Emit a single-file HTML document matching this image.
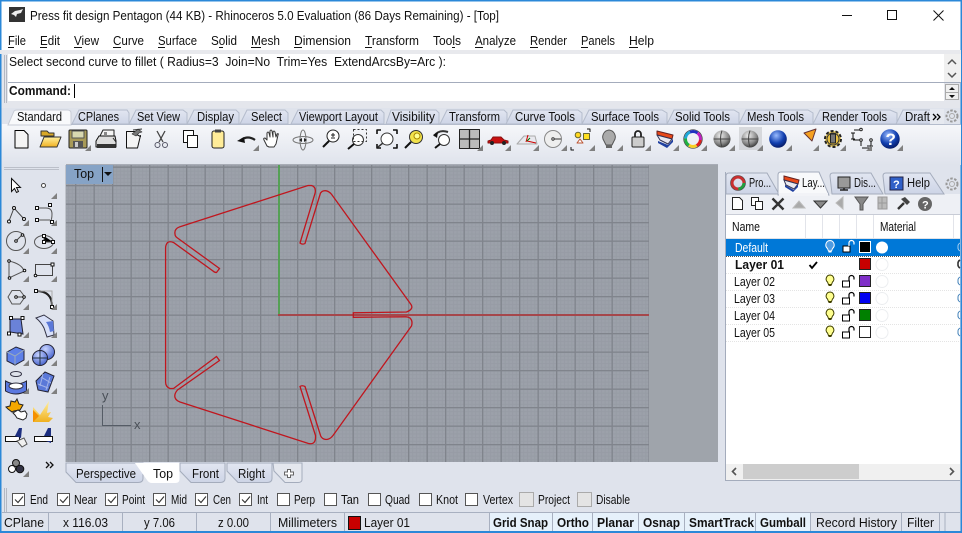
<!DOCTYPE html>
<html><head><meta charset="utf-8"><style>
html,body{margin:0;padding:0;background:#dfe3ec;overflow:hidden}
svg{display:block}
text{font-family:"Liberation Sans",sans-serif;font-size:12.5px;fill:#111}
.b{font-weight:bold}
</style></head><body>
<svg width="962" height="533" viewBox="0 0 962 533" xmlns="http://www.w3.org/2000/svg">
<defs>
<pattern id="minor" patternUnits="userSpaceOnUse" x="279" y="315" width="3.7" height="3.7"><rect width="3.7" height="3.7" fill="#9ca1aa"/><rect width="3.7" height="1" fill="#979ca5"/><rect width="1" height="3.7" fill="#979ca5"/></pattern>
<pattern id="major" patternUnits="userSpaceOnUse" x="278.5" y="314.5" width="18.5" height="18.5"><rect width="1.3" height="18.5" fill="#80848c"/><rect width="18.5" height="1.3" fill="#80848c"/></pattern>
<linearGradient id="tb" x1="0" y1="0" x2="0" y2="1"><stop offset="0" stop-color="#f6f7fa"/><stop offset="1" stop-color="#dfe3ec"/></linearGradient>
<linearGradient id="tab" x1="0" y1="0" x2="0" y2="1"><stop offset="0" stop-color="#e2e6f1"/><stop offset="1" stop-color="#cdd4e6"/></linearGradient>
<linearGradient id="yel" x1="0" y1="0" x2="0" y2="1"><stop offset="0" stop-color="#fff0a0"/><stop offset="1" stop-color="#f0b020"/></linearGradient>
<radialGradient id="gs" cx=".4" cy=".3" r=".8"><stop offset="0" stop-color="#eee"/><stop offset=".6" stop-color="#888"/><stop offset="1" stop-color="#222"/></radialGradient>
<radialGradient id="bs" cx=".4" cy=".3" r=".8"><stop offset="0" stop-color="#9bf"/><stop offset=".55" stop-color="#1240b0"/><stop offset="1" stop-color="#041050"/></radialGradient>
<radialGradient id="ls" cx=".4" cy=".3" r=".8"><stop offset="0" stop-color="#c8d4ff"/><stop offset="1" stop-color="#3a58c8"/></radialGradient>
<path id="m" d="M0 0h-6l6-6z" fill="#808080"/>
<g id="bulb"><path d="M0-6a4 4 0 0 0-2.500 7l1 2.500h3l1-2.500A4 4 0 0 0 0-6z" fill="#ffff90" stroke="#404000"/><path d="M-1.500 4.500h3" stroke="#404000"/></g>
<g id="lock"><rect x="-5.500" y="0" width="7" height="6" fill="#fff" stroke="#000"/><path d="M1 0v-3a2.500 2.500 0 0 1 5 0v1.500" fill="none" stroke="#000" stroke-width="1.200"/></g>
</defs>

<!-- window -->
<rect width="962" height="533" fill="#dfe3ec"/>
<rect width="962" height="50" fill="#fff"/>
<rect x="0" y="0" width="962" height="1.500" fill="#2b88d8"/>
<rect x="0" y="0" width="1.500" height="533" fill="#2b88d8"/>
<rect x="960.500" y="0" width="1.500" height="533" fill="#2b88d8"/>
<rect x="0" y="531" width="962" height="2" fill="#2b88d8"/>

<!-- title -->
<rect x="9" y="7" width="16" height="15" fill="#333"/><path d="M11 14l4-3 5-1 3-1-2 4-4 1-1 3-2-2z" fill="#eee"/>
<text x="30" y="20" textLength="469" lengthAdjust="spacingAndGlyphs">Press fit design Pentagon (44 KB) - Rhinoceros 5.0 Evaluation (86 Days Remaining) - [Top]</text>
<path d="M842 15.500h10" stroke="#111"/><rect x="887.500" y="10.500" width="9" height="9" fill="none" stroke="#111"/><path d="M933.500 10.500l10 10m0-10l-10 10" stroke="#111"/>

<!-- menu -->
<g>
<text x="8" y="45" textLength="18" lengthAdjust="spacingAndGlyphs">File</text><path d="M8 47.500h6" stroke="#111"/>
<text x="40" y="45" textLength="20" lengthAdjust="spacingAndGlyphs">Edit</text><path d="M40 47.500h7" stroke="#111"/>
<text x="74" y="45" textLength="25" lengthAdjust="spacingAndGlyphs">View</text><path d="M74 47.500h8" stroke="#111"/>
<text x="113" y="45" textLength="31" lengthAdjust="spacingAndGlyphs">Curve</text><path d="M113 47.500h8" stroke="#111"/>
<text x="158" y="45" textLength="39" lengthAdjust="spacingAndGlyphs">Surface</text><path d="M158 47.500h7" stroke="#111"/>
<text x="211" y="45" textLength="26" lengthAdjust="spacingAndGlyphs">Solid</text><path d="M219 47.500h4" stroke="#111"/>
<text x="251" y="45" textLength="29" lengthAdjust="spacingAndGlyphs">Mesh</text><path d="M251 47.500h10" stroke="#111"/>
<text x="294" y="45" textLength="57" lengthAdjust="spacingAndGlyphs">Dimension</text><path d="M294 47.500h8" stroke="#111"/>
<text x="365" y="45" textLength="54" lengthAdjust="spacingAndGlyphs">Transform</text><path d="M365 47.500h7" stroke="#111"/>
<text x="433" y="45" textLength="28" lengthAdjust="spacingAndGlyphs">Tools</text><path d="M452 47.500h3" stroke="#111"/>
<text x="475" y="45" textLength="41" lengthAdjust="spacingAndGlyphs">Analyze</text><path d="M475 47.500h8" stroke="#111"/>
<text x="530" y="45" textLength="37" lengthAdjust="spacingAndGlyphs">Render</text><path d="M530 47.500h8" stroke="#111"/>
<text x="581" y="45" textLength="34" lengthAdjust="spacingAndGlyphs">Panels</text><path d="M581 47.500h7" stroke="#111"/>
<text x="629" y="45" textLength="25" lengthAdjust="spacingAndGlyphs">Help</text><path d="M629 47.500h9" stroke="#111"/>
</g>

<!-- command -->
<rect x="0" y="50" width="961" height="4" fill="#e8e9ed"/>
<rect x="1.500" y="54" width="959" height="54" fill="#e4e6ec"/>
<rect x="8" y="54" width="936" height="28" fill="#fff"/>
<rect x="8" y="83" width="936" height="18" fill="#fff"/>
<path d="M8 82.500h953" stroke="#a4acbc"/>
<path d="M4.500 55v48M6.500 55v48" stroke="#b4b8c2"/>
<text x="9" y="66" xml:space="preserve" style="white-space:pre" textLength="437" lengthAdjust="spacingAndGlyphs">Select second curve to fillet ( Radius=3  Join=No  Trim=Yes  ExtendArcsBy=Arc ):</text>
<text x="9" y="95" class="b" textLength="62" lengthAdjust="spacingAndGlyphs">Command:</text>
<path d="M74.500 84v14" stroke="#000"/>
<rect x="944" y="54" width="17" height="28" fill="#f0f0f0"/>
<path d="M948 64l4-4 4 4M948 73l4 4 4-4" fill="none" stroke="#555" stroke-width="1.500"/>
<rect x="945.500" y="84.500" width="13" height="8" fill="#f0f0f0" stroke="#aaa"/><rect x="945.500" y="92.500" width="13" height="7" fill="#f0f0f0" stroke="#aaa"/>
<path d="M949 90l3-3 3 3zM949 95l3 3 3-3z" fill="#111"/>

<!-- toolbar tabs -->
<rect x="2" y="124" width="959" height="41" fill="url(#tb)"/>
<path d="M66 164.500h652" stroke="#a8acb6"/>
<g fill="url(#tab)" stroke="#b4bccc">
<path d="M72 124l7-14h48l2 3v11z"/><path d="M129 124l7-14h47l4 3v11z"/><path d="M187 124l7-14h42l3 3v11z"/><path d="M240 124l7-14h38l3 3v11z"/><path d="M291 124l7-14h83l3 3v11z"/><path d="M386 124l5-14h45l3 3v11z"/><path d="M440 124l7-14h57l3 3v11z"/><path d="M506 124l7-14h65l4 3v11z"/><path d="M582 124l7-14h73l5 3v11z"/><path d="M667 124l7-14h60l5 3v11z"/><path d="M739 124l7-14h62l5 3v11z"/><path d="M813 124l7-14h70l7 3v11z"/><path d="M896 124l7-14h30v14z"/>
</g>
<path d="M8 125l6-14q1-1 3-1h50q4 0 4 3v12z" fill="#f8f9fb" stroke="#c8ccd6"/>
<path d="M71 124.500h890" stroke="#b4bccc"/>
<rect x="930" y="109" width="14" height="15" fill="#e6e9f0"/>
<g>
<text x="17" y="121" textLength="45" lengthAdjust="spacingAndGlyphs">Standard</text>
<text x="78" y="121" textLength="41" lengthAdjust="spacingAndGlyphs">CPlanes</text>
<text x="137" y="121" textLength="43" lengthAdjust="spacingAndGlyphs">Set View</text>
<text x="197" y="121" textLength="37" lengthAdjust="spacingAndGlyphs">Display</text>
<text x="251" y="121" textLength="31" lengthAdjust="spacingAndGlyphs">Select</text>
<text x="299" y="121" textLength="79" lengthAdjust="spacingAndGlyphs">Viewport Layout</text>
<text x="392" y="121" textLength="43" lengthAdjust="spacingAndGlyphs">Visibility</text>
<text x="449" y="121" textLength="51" lengthAdjust="spacingAndGlyphs">Transform</text>
<text x="515" y="121" textLength="60" lengthAdjust="spacingAndGlyphs">Curve Tools</text>
<text x="591" y="121" textLength="68" lengthAdjust="spacingAndGlyphs">Surface Tools</text>
<text x="675" y="121" textLength="55" lengthAdjust="spacingAndGlyphs">Solid Tools</text>
<text x="747" y="121" textLength="57" lengthAdjust="spacingAndGlyphs">Mesh Tools</text>
<text x="822" y="121" textLength="65" lengthAdjust="spacingAndGlyphs">Render Tools</text>
<text x="905" y="121" textLength="25" lengthAdjust="spacingAndGlyphs">Draft</text>
</g>
<path d="M933 114l3 3-3 3M937 114l3 3-3 3" fill="none" stroke="#000" stroke-width="1.300"/>
<g transform="translate(952 116)"><circle r="5.500" fill="none" stroke="#999" stroke-width="2" stroke-dasharray="2.500 1.500"/><circle r="2.500" fill="none" stroke="#aaa"/></g>

<!-- toolbar icons -->
<g stroke-linejoin="round">
<path d="M15 130.500h9l4 4v13.500h-13z" fill="#f4f4f4" stroke="#000"/>
<path d="M41 134v-3h6l2 2h5v3h-13z" fill="#d8a828" stroke="#333"/><path d="M40 147l4-10h17l-4 10z" fill="url(#yel)" stroke="#333"/>
<rect x="69" y="130" width="18" height="18" rx="1" fill="#a89a58" stroke="#222"/><rect x="72" y="131" width="12" height="7" fill="#d8d8b0" stroke="#555"/><rect x="73" y="141" width="10" height="7" fill="#555"/><rect x="75" y="142" width="3" height="5" fill="#ccc"/><use href="#m" x="91" y="151"/>
<path d="M100 136l3-6h11v6z" fill="#f4f4f4" stroke="#222"/><path d="M96 141l3-5h16l1 5v6H96z" fill="#ddd" stroke="#111"/><rect x="97" y="144" width="19" height="4" fill="#333"/><path d="M113 138l3 4v5" stroke="#222" fill="none"/><rect x="104" y="132" width="3" height="3" fill="#888"/>
<path d="M126.500 131.500h10v3l4 2v-1l-3 12.500h-11z" fill="#f4f4f4" stroke="#111"/><path d="M132 134l6-5 4 3-3 1-3 3z" fill="#777" stroke="#333" stroke-width=".6"/><path d="M133 130l9-1" stroke="#333"/>
<path d="M157 131l6 11M165 131l-6 11" stroke="#444" stroke-width="1.300"/><circle cx="157.500" cy="145" r="2.500" fill="none" stroke="#556"/><circle cx="165" cy="145" r="2.500" fill="none" stroke="#556"/>
<rect x="183.500" y="130.500" width="10" height="12" fill="#fff" stroke="#111"/><rect x="187.500" y="135.500" width="10" height="12" fill="#fff" stroke="#111"/>
<rect x="212" y="131" width="12" height="17" rx="2" fill="#ffec98" stroke="#222"/><rect x="215" y="129.500" width="6" height="3" fill="#444"/>
<path d="M241 140q7-5 14 0" fill="none" stroke="#222" stroke-width="2.200"/><path d="M237 141l7-4 1 6z" fill="#111"/><use href="#m" x="259" y="151"/>
<path d="M267 146l-3-6q-1-2 1-2l2 2v-7q1-2 2 0l1 4v-6q1-2 2 0l1 6v-5q1-2 2 0l1 5 1-3q2-1 1 1l-2 9-2 3h-5z" fill="#fff" stroke="#333"/>
<g stroke="#777" fill="none"><ellipse cx="303" cy="140" rx="10" ry="3.500"/><ellipse cx="303" cy="140" rx="3" ry="10"/></g><path d="M299 140l3-2v4zM307 140l-3-2v4z" fill="#222"/>
<circle cx="333" cy="136" r="6" fill="#fff" stroke="#222"/><path d="M329 141l-6 6" stroke="#111" stroke-width="2"/><path d="M331 135h4M333 133v4M331 138h4" stroke="#222" fill="none"/>
<circle cx="358" cy="140" r="5.500" fill="#fff" stroke="#333"/><path d="M354 144l-6 5" stroke="#111" stroke-width="2"/><rect x="353.500" y="129.500" width="13" height="12" fill="none" stroke="#333" stroke-dasharray="2 2"/>
<circle cx="387" cy="139" r="6" fill="#fff" stroke="#333"/><path d="M383 143l-5 4" stroke="#333" stroke-width="1.500"/><path d="M377 134v-4h4M393 130h4v4M377 144v4h4M393 148h4v-4" fill="none" stroke="#111" stroke-width="1.600"/>
<circle cx="416" cy="137" r="6.500" fill="#f2e24a" stroke="#333"/><circle cx="417" cy="136" r="3" fill="#ffff90" stroke="#aa8800"/><path d="M411 142l-6 6" stroke="#111" stroke-width="2"/>
<circle cx="444" cy="140" r="5.500" fill="#fff" stroke="#333"/><path d="M440 144l-5 4" stroke="#111" stroke-width="2"/><path d="M434 136q5-7 14-4" fill="none" stroke="#333" stroke-width="2"/><path d="M433 135l5-3-1 6z" fill="#111"/>
<rect x="459.500" y="129.500" width="20" height="19" fill="#bbb" stroke="#222"/><path d="M469.500 130v18M460 139h19" stroke="#222" stroke-width="1.300"/>
<use href="#m" x="483" y="151"/>
<path d="M488 141l3-1 2-3h8l3 3 4 1v2h-20z" fill="#c81010" stroke="#811"/><circle cx="492" cy="143" r="2" fill="#222"/><circle cx="504" cy="143" r="2" fill="#222"/><use href="#m" x="511" y="151"/>
<path d="M517 144l7-8h11l2 8z" fill="#e8e8ee" stroke="#aaa"/><path d="M526 142l2-7M527 141l9 2" stroke="#c00"/><path d="M527 141l3-3" stroke="#070"/><use href="#m" x="539" y="151"/>
<circle cx="553" cy="139" r="8.500" fill="#eee" stroke="#888"/><path d="M553 139h8" stroke="#333"/><circle cx="553" cy="139" r="1.200" fill="#fff" stroke="#333"/><use href="#m" x="567" y="151"/>
<circle cx="578" cy="135" r="2.800" fill="#ffd820" stroke="#663"/><rect x="583.500" y="133.500" width="6" height="6" fill="#ffe020" stroke="#663"/><path d="M577 143l3-4 3 4z" fill="#fff" stroke="#b53"/><path d="M587 129h3v3M571 147v3h3" fill="none" stroke="#111"/><use href="#m" x="595" y="151"/>
<path d="M609 130a7 7 0 0 0-5 11l2 4h6l2-4a7 7 0 0 0-5-11z" fill="#aaa" stroke="#555"/><rect x="606" y="145" width="6" height="3" fill="#666"/><use href="#m" x="623" y="151"/>
<rect x="632" y="137" width="12" height="10" rx="1" fill="#ccc" stroke="#222"/><path d="M635 137v-3a3 3 0 0 1 6 0v3" fill="none" stroke="#222" stroke-width="1.800"/><use href="#m" x="651" y="151"/>
<path d="M657 131l16 4-1 4-15-4z" fill="#e84818" stroke="#622"/><path d="M657 135l15 4-4 5-8-4z" fill="#e8e8f0" stroke="#335"/><path d="M658 141l10 4 5-6v3l-6 6-9-5z" fill="#2040a0"/><use href="#m" x="679" y="151"/>
<circle cx="693" cy="139" r="7.500" fill="none" stroke="#e02020" stroke-width="3" stroke-dasharray="8 40"/><circle cx="693" cy="139" r="7.500" fill="none" stroke="#f8d020" stroke-width="3" stroke-dasharray="8 39" stroke-dashoffset="-8"/><circle cx="693" cy="139" r="7.500" fill="none" stroke="#20b040" stroke-width="3" stroke-dasharray="8 39" stroke-dashoffset="-16"/><circle cx="693" cy="139" r="7.500" fill="none" stroke="#20a8d8" stroke-width="3" stroke-dasharray="8 39" stroke-dashoffset="-24"/><circle cx="693" cy="139" r="7.500" fill="none" stroke="#2030c0" stroke-width="3" stroke-dasharray="8 39" stroke-dashoffset="-32"/><circle cx="693" cy="139" r="7.500" fill="none" stroke="#c020c0" stroke-width="3" stroke-dasharray="8 39" stroke-dashoffset="-40"/><circle cx="693" cy="139" r="9.300" fill="none" stroke="#444" stroke-width=".7"/><use href="#m" x="707" y="151"/>
<circle cx="722" cy="139" r="8.500" fill="url(#gs)"/><path d="M713.500 139h17M722 130.500q-3 8 0 17" stroke="#444" fill="none"/><use href="#m" x="735" y="151"/>
<rect x="739" y="127" width="23" height="23" fill="#c4c6ca" opacity=".6"/><circle cx="750" cy="139" r="8.500" fill="url(#gs)"/><path d="M741.500 139h17M750 130.500q-3 8 0 17" stroke="#444" fill="none"/><use href="#m" x="763" y="151"/>
<circle cx="778" cy="139" r="8.800" fill="url(#bs)"/><use href="#m" x="792" y="151"/>
<path d="M804 133l12-4-4 12z" fill="#f5a020" stroke="#633"/><use href="#m" x="819" y="151"/>
<g transform="translate(833 139)"><circle r="8" fill="#f0d060" stroke="#222" stroke-width="2" stroke-dasharray="3 2"/><circle r="6" fill="#e8c040" stroke="#333"/><rect x="-2.500" y="-5" width="5" height="9" fill="#777" stroke="#222"/></g><use href="#m" x="846" y="151"/>
<g fill="none" stroke="#111"><path d="M854 130h6M853 133v6M851 133h4M851 139h4M853 140h8v6M862 148h8M867 146h6M871 141v7"/></g><g fill="#fff" stroke="#222"><circle cx="861" cy="129.500" r="1.300"/><circle cx="861" cy="140" r="1.300"/><circle cx="871" cy="140" r="1.300"/></g><use href="#m" x="872" y="151"/>
<circle cx="890" cy="139" r="9.700" fill="url(#bs)"/><text x="885.500" y="145" class="b" style="font-size:17px;fill:#fff">?</text><use href="#m" x="903" y="151"/>
</g>

<!-- left toolbar -->
<rect x="2" y="165" width="63" height="320" fill="#dfe3ec"/>
<path d="M4 167.500h55M4 169.500h55" stroke="#bbbfc9"/>
<g>
<path d="M11.500 178.500v13l3-3 2 4 2-1-2-4h4z" fill="#fff" stroke="#111"/>
<circle cx="43.500" cy="185.500" r="2" fill="#fff" stroke="#444"/><use href="#m" x="57" y="199"/>
<path d="M9 221l5-13 10 11" fill="none" stroke="#444"/><g fill="#fff" stroke="#111"><circle cx="9" cy="221.500" r="1.500"/><circle cx="14" cy="208" r="1.500"/><circle cx="24" cy="219" r="1.500"/></g><use href="#m" x="29" y="226"/>
<path d="M38 208h8q6 0 6 6t-2 8" fill="none" stroke="#555"/><path d="M38 220h12" stroke="#555"/><g fill="#fff" stroke="#111"><rect x="35.500" y="206.500" width="3" height="3"/><rect x="35.500" y="218.500" width="3" height="3"/><rect x="48.500" y="203.500" width="3" height="3"/><rect x="50.500" y="220.500" width="3" height="3"/></g><use href="#m" x="57" y="226"/>
<circle cx="16" cy="241" r="9.500" fill="none" stroke="#555"/><path d="M16 241l6-6" stroke="#444"/><circle cx="16" cy="241" r="1.300" fill="#fff" stroke="#111"/><circle cx="22.500" cy="235" r="1.300" fill="#fff" stroke="#111"/><use href="#m" x="29" y="254"/>
<ellipse cx="44" cy="242" rx="9.500" ry="6.500" fill="none" stroke="#555"/><path d="M44 236v6h9" stroke="#444"/><g fill="#fff" stroke="#111"><rect x="42.500" y="234.500" width="3" height="3"/><rect x="42.500" y="240.500" width="3" height="3"/><rect x="51.500" y="240.500" width="3" height="3"/></g><use href="#m" x="57" y="254"/>
<path d="M9 261q13 3 15 10l-15 7z" fill="none" stroke="#555"/><g fill="#fff" stroke="#111"><circle cx="9" cy="261" r="1.300"/><circle cx="24.500" cy="270.500" r="1.300"/><circle cx="9.500" cy="278" r="1.300"/></g><use href="#m" x="29" y="282"/>
<rect x="35.500" y="264.500" width="17" height="11" fill="none" stroke="#444"/><circle cx="35.500" cy="275.500" r="1.300" fill="#fff" stroke="#111"/><rect x="51" y="263" width="3" height="3" fill="#fff" stroke="#111"/><use href="#m" x="57" y="282"/>
<path d="M8 297l4-6.500h8l5 6.500-5 7h-8z" fill="none" stroke="#555"/><path d="M16 297h8" stroke="#444"/><circle cx="16" cy="297" r="1.300" fill="#fff" stroke="#111"/><circle cx="24" cy="297" r="1.300" fill="#fff" stroke="#111"/><use href="#m" x="29" y="310"/>
<path d="M36 291q16 0 16 15" fill="none" stroke="#222" stroke-width="2"/><path d="M36 291h16v15" fill="none" stroke="#aaa"/><rect x="34.500" y="289.500" width="3" height="3" fill="#fff" stroke="#111"/><rect x="50.500" y="305.500" width="3" height="3" fill="#fff" stroke="#111"/><use href="#m" x="57" y="310"/>
<path d="M10 319h11l2 15-13-2z" fill="#6a82d8" stroke="#223"/><g fill="#fff" stroke="#111"><rect x="9.500" y="316.500" width="3" height="3"/><rect x="21" y="316.500" width="3" height="3"/><rect x="7.500" y="332" width="3" height="3"/><rect x="18" y="333" width="3" height="3"/></g><use href="#m" x="29" y="338"/>
<path d="M36 318l8-3 9 6 1 14-7 2-3-9q-3-6-8-10z" fill="#d8e0f8" stroke="#334"/><path d="M46 322l7-1 1 10-4 1q-1-6-4-10z" fill="#5a78d8"/><use href="#m" x="57" y="338"/>
<path d="M7 352l9-5 8 3v10l-9 5-8-4z" fill="#5e80e8" stroke="#223"/><path d="M7 352l8 4 9-6M15 356v9" fill="none" stroke="#9ab"/><use href="#m" x="29" y="366"/>
<circle cx="47" cy="352" r="7.500" fill="url(#ls)" stroke="#223"/><circle cx="40" cy="358" r="7.500" fill="url(#ls)" stroke="#223"/><path d="M33 358h14M40 351v14" fill="none" stroke="#234"/><use href="#m" x="57" y="366"/>
<ellipse cx="16" cy="374" rx="5.500" ry="2.500" fill="none" stroke="#334"/><path d="M5.500 381v10q10 6 21 0v-10q-10 6-21 0z" fill="#5a78e0" stroke="#223"/><ellipse cx="16" cy="386" rx="7" ry="3" fill="#fff" stroke="#334"/><use href="#m" x="29" y="394"/>
<path d="M36 381l9-9 9 4-6 16-10-2z" fill="#5a78d8" stroke="#223"/><path d="M41 377l10 6M38 384l10 4M43 374l-3 12M50 377l-4 13" stroke="#a4b4e8" fill="none"/><use href="#m" x="57" y="394"/>
<path d="M6 407l4-1 1-5 4 1 2-3 2 5 4 1-3 5-6 1-2 1-4-3z" fill="#f5a800" stroke="#222"/><path d="M13 413l5-3 3 2 4-1 2 3-1 4-3 2-3-1-3-1-2-3z" fill="#fff" stroke="#222"/>
<path d="M33 422v-15l7 8 9-14-2 12 4-1-3 5 5 1-4 4z" fill="url(#yel)"/><path d="M33 422v-12l6 6z" fill="#f59000"/>
<rect x="5.500" y="436.500" width="14" height="5" fill="#fff" stroke="#111"/><path d="M15 436l4-8 3 0-1 10z" fill="#1d2f80"/><path d="M17 441l7-3 3 6-5 3z" fill="#f0f0f0" stroke="#555"/>
<rect x="34.500" y="436.500" width="18" height="5" fill="#fff" stroke="#111"/><path d="M44 436l4-8h3v8z" fill="#1d2f80"/><path d="M46 441h5v2z" fill="#1d2f80"/>
<circle cx="16" cy="463" r="3.500" fill="#888" stroke="#111"/><circle cx="12" cy="469" r="3.500" fill="#fff" stroke="#111"/><circle cx="20" cy="469" r="3.800" fill="#334" stroke="#111"/><use href="#m" x="29" y="477"/>
<path d="M46 462l3 3-3 3M50 462l3 3-3 3" fill="none" stroke="#111" stroke-width="1.300"/>
</g>

<!-- viewport -->
<rect x="66" y="165" width="652" height="297" fill="#9fa4ab"/>
<rect x="66" y="165" width="583" height="297" fill="url(#minor)"/>
<rect x="66" y="165" width="583" height="297" fill="url(#major)"/>
<rect x="65" y="165" width="1" height="297" fill="#c0c4cc"/>
<rect x="66" y="165" width="47" height="19" fill="#86a3c6"/>
<text x="74" y="178" textLength="20" lengthAdjust="spacingAndGlyphs">Top</text>
<path d="M102.500 167v15" stroke="#111"/><path d="M104 172h8l-4 4z" fill="#111"/>
<rect x="278" y="165" width="2" height="150" fill="#55a055"/>
<rect x="278" y="314" width="371" height="2" fill="#a5474b"/>
<path d="M353.300 312.800L406.500 312Q414 309 411 304.500L331.700 194.500Q327 189 322 191.500L320.500 193L305 243.500Q302.500 245 300 243L315 193.500Q316.500 187 311.500 185.500L308 185.500L180 226.700Q174 229 175 234Q175 236.500 177.500 238L219.500 268.500L216.500 272.500Q214.500 272.500 213 271L173.500 242.500Q170 241 167.500 242.500Q165.600 245 165.600 248V382Q165.600 387 170 388.500H173.500L216.500 356.500L219.500 360.500L177.500 390Q174 394 175 397.500Q176 400.500 180 402L308.500 443.500Q315 445 315.500 438V435.500L300 386.500Q302 385 305 386.500L320.700 436Q322 439 326 439.500Q330 439.500 333 435.500L411.500 326Q413 321 410 318Q408 316.800 406 316.800L353.300 317.300Z" fill="none" stroke="#c0161e" stroke-width="1.300"/>
<path d="M102.500 405v20.500H131" fill="none" stroke="#555c66"/>
<text x="102" y="400" style="font-size:13px;fill:#4a5058">y</text><text x="134" y="429" style="font-size:13px;fill:#4a5058">x</text>

<!-- viewport tabs -->
<g fill="url(#tab)" stroke="#a4acbc">
<path d="M66 463v9l10 10.500h62q5 0 5-4v-15.500z"/>
<path d="M180 463v8l11 11.500h29q5 0 5-4v-15.500z"/>
<path d="M227 463v8l11 11.500h29q5 0 5-4v-15.500z"/>
</g>
<path d="M273 463l1 8 11 11.500h13q4 0 4-3v-16.500z" fill="#e4e7ee" stroke="#a4acbc"/>
<path d="M135 463H179.500v16q0 4-4 4H152q-3 0-5-3z" fill="#fff"/>
<text x="76" y="478" textLength="60" lengthAdjust="spacingAndGlyphs">Perspective</text>
<text x="153" y="478" textLength="20" lengthAdjust="spacingAndGlyphs">Top</text>
<text x="192" y="478" textLength="27" lengthAdjust="spacingAndGlyphs">Front</text>
<text x="238" y="478" textLength="27" lengthAdjust="spacingAndGlyphs">Right</text>
<path d="M287.500 469.500h3v2.500h3v3h-3v2.500h-3v-2.500h-3v-3h3z" fill="#fff" stroke="#666"/>

<!-- panel -->
<path d="M725.500 172v308.500H960" fill="none" stroke="#a4acbc"/>
<rect x="726" y="194" width="234" height="286" fill="#fff"/>
<rect x="726" y="194" width="234" height="20" fill="#eef0f5"/>
<path d="M726 214.500h234" stroke="#c8ccd6"/>
<path d="M726 194v-18q0-3 3-3h38l12 21z" fill="url(#tab)" stroke="#a4acbc"/>
<path d="M832 194l-2-18q0-3 3-3h38l12 21z" fill="url(#tab)" stroke="#a4acbc"/>
<path d="M885 194l-2-18q0-3 3-3h44l14 21z" fill="url(#tab)" stroke="#a4acbc"/>
<path d="M778 195v-20q0-3 3-3h38l10 23z" fill="#f8f9fb" stroke="#a4acbc"/>
<rect x="779" y="193" width="49" height="3" fill="#f2f3f7"/>
<circle cx="738" cy="183" r="6" fill="none" stroke="#c83030" stroke-width="3"/><circle cx="738" cy="183" r="6" fill="none" stroke="#20a040" stroke-width="3" stroke-dasharray="9 30"/><circle cx="738" cy="183" r="7.500" fill="none" stroke="#444" stroke-width=".6"/>
<text x="749" y="187" textLength="22" lengthAdjust="spacingAndGlyphs">Pro...</text>
<path d="M784 176l15 4-1 4-14-4z" fill="#e84818" stroke="#622"/><path d="M784 180l14 4-4 5-8-4z" fill="#e8e8f0" stroke="#335"/><path d="M785 185l9 5 4-6v3l-5 5-8-5z" fill="#2040a0"/>
<text x="802" y="187" textLength="23" lengthAdjust="spacingAndGlyphs">Lay...</text>
<rect x="838" y="177" width="12" height="11" fill="#999" stroke="#222"/><path d="M840 190h8M844 188v2" stroke="#222" stroke-width="1.500"/>
<text x="854" y="187" textLength="22" lengthAdjust="spacingAndGlyphs">Dis...</text>
<rect x="890" y="177" width="13" height="13" fill="#3060c8" stroke="#224"/><text x="893" y="188" class="b" style="fill:#fff;font-size:11px">?</text>
<text x="907" y="187" textLength="23" lengthAdjust="spacingAndGlyphs">Help</text>
<g transform="translate(952 184)"><circle r="5.500" fill="none" stroke="#999" stroke-width="2" stroke-dasharray="2.500 1.500"/><circle r="2.500" fill="none" stroke="#aaa"/></g>
<!-- panel toolbar -->
<path d="M732.500 197.500h7l3 3v9h-10z" fill="#fff" stroke="#222"/>
<rect x="751.500" y="197.500" width="7" height="8" fill="#fff" stroke="#222"/><rect x="755.500" y="201.500" width="7" height="8" fill="#fff" stroke="#222"/>
<path d="M772.500 198.500l11 11m0-11l-11 11" stroke="#333" stroke-width="2.400"/>
<path d="M793 208l6-7 6 7z" fill="#aaa" stroke="#bbb"/>
<path d="M814 201h13l-6.500 7z" fill="#888" stroke="#333"/>
<path d="M843 197v12l-7-6z" fill="#aaa" stroke="#bbb"/>
<path d="M855 197h13l-5 7v6h-3v-6z" fill="#888" stroke="#555"/>
<rect x="878" y="197" width="9" height="12" fill="#bbb" stroke="#999"/><path d="M882 197v12M878 203h9" stroke="#999"/>
<path d="M898 209l6-6" stroke="#333" stroke-width="2.400"/><path d="M901 199l4-2 5 5-3 3z" fill="#444"/>
<circle cx="925" cy="204" r="7" fill="#666"/><text x="922" y="208.500" class="b" style="fill:#fff;font-size:11px">?</text>
<!-- header -->
<path d="M805.500 215v23M822.500 215v23M839.500 215v23M856.500 215v23M873.500 215v23M953.500 215v23" stroke="#e2e4ea"/>
<path d="M726 238.500h234" stroke="#e0e2e8"/>
<text x="732" y="231" textLength="28" lengthAdjust="spacingAndGlyphs">Name</text>
<text x="880" y="231" textLength="36" lengthAdjust="spacingAndGlyphs">Material</text>
<!-- rows -->
<rect x="726" y="239" width="234" height="17" fill="#0078d7"/>
<g stroke="#e4e4e4" stroke-dasharray="1 1"><path d="M726 273.500h234M726 290.500h234M726 307.500h234M726 324.500h234M726 341.500h234"/></g>
<path d="M726 256.500h234" stroke="#555" stroke-dasharray="1 1"/>
<text x="735" y="252" textLength="33" lengthAdjust="spacingAndGlyphs" style="fill:#fff">Default</text>
<text x="735" y="269" class="b" textLength="49" lengthAdjust="spacingAndGlyphs">Layer 01</text>
<text x="734" y="286" textLength="41" lengthAdjust="spacingAndGlyphs">Layer 02</text>
<text x="734" y="303" textLength="41" lengthAdjust="spacingAndGlyphs">Layer 03</text>
<text x="734" y="320" textLength="41" lengthAdjust="spacingAndGlyphs">Layer 04</text>
<text x="734" y="337" textLength="41" lengthAdjust="spacingAndGlyphs">Layer 05</text>
<path d="M809.500 265l2.500 3 5-6" fill="none" stroke="#000" stroke-width="1.800"/>
<g transform="translate(830 246.500)"><path d="M0-6a4.500 4.500 0 0 0-2.500 8l1 2.500h3l1-2.500A4.500 4.500 0 0 0 0-6z" fill="#4f9be0" stroke="#fff"/><path d="M-1.500 5.500h3" stroke="#fff"/></g>
<g transform="translate(848 246)"><rect x="-5" y="0" width="7" height="6" fill="#fff" stroke="#000" stroke-width="1"/><path d="M1 0v-3a2.500 2.500 0 0 1 5 0v1.500" fill="none" stroke="#fff" stroke-width="1.200"/></g>
<use href="#bulb" x="830" y="281"/><use href="#bulb" x="830" y="298"/><use href="#bulb" x="830" y="315"/><use href="#bulb" x="830" y="332"/>
<use href="#lock" x="848" y="281"/><use href="#lock" x="848" y="298"/><use href="#lock" x="848" y="315"/><use href="#lock" x="848" y="332"/>
<g stroke="#222"><rect x="859.500" y="241.500" width="11" height="11" fill="#000" stroke="#fff"/><rect x="859.500" y="258.500" width="11" height="11" fill="#c80000"/><rect x="859.500" y="275.500" width="11" height="11" fill="#7f2fc8"/><rect x="859.500" y="292.500" width="11" height="11" fill="#0000f0"/><rect x="859.500" y="309.500" width="11" height="11" fill="#008000"/><rect x="859.500" y="326.500" width="11" height="11" fill="#fff"/></g>
<circle cx="882" cy="247.500" r="6" fill="#fff"/>
<g fill="#fff" stroke="#eceef0"><circle cx="882" cy="264.500" r="6"/><circle cx="882" cy="281.500" r="6"/><circle cx="882" cy="298.500" r="6"/><circle cx="882" cy="315.500" r="6"/><circle cx="882" cy="332.500" r="6"/></g>
<g fill="none" stroke="#3f7fb8"><path d="M960 243a4 4 0 0 0-2 4 4 4 0 0 0 2 4" stroke="#a8d0f0"/><path d="M960 277a4 4 0 0 0-2 4 4 4 0 0 0 2 4M960 294a4 4 0 0 0-2 4 4 4 0 0 0 2 4M960 311a4 4 0 0 0-2 4 4 4 0 0 0 2 4M960 328a4 4 0 0 0-2 4 4 4 0 0 0 2 4"/><path d="M960 260a4 4 0 0 0-2 4 4 4 0 0 0 2 4" stroke="#333" stroke-width="1.600"/></g>
<!-- panel scrollbar -->
<rect x="726" y="464" width="234" height="16" fill="#f0f0f0"/>
<rect x="743" y="464" width="116" height="15" fill="#cdcdcd"/>
<path d="M736 468l-3.500 3.500 3.500 3.500M950 468l3.500 3.500-3.500 3.500" fill="none" stroke="#555" stroke-width="1.600"/>

<!-- osnap bar -->
<path d="M4.500 488v24M6.500 488v24" stroke="#b4b8c2"/>
<g fill="#fff" stroke="#555">
<rect x="12.500" y="493.500" width="12" height="12"/><rect x="57.500" y="493.500" width="12" height="12"/><rect x="105.500" y="493.500" width="12" height="12"/><rect x="153.500" y="493.500" width="12" height="12"/><rect x="195.500" y="493.500" width="12" height="12"/><rect x="239.500" y="493.500" width="12" height="12"/><rect x="277.500" y="493.500" width="12" height="12"/><rect x="324.500" y="493.500" width="12" height="12"/><rect x="368.500" y="493.500" width="12" height="12"/><rect x="419.500" y="493.500" width="12" height="12"/><rect x="465.500" y="493.500" width="12" height="12"/>
</g>
<g fill="#e4e4e4" stroke="#aaa"><rect x="519.500" y="492.500" width="14" height="14"/><rect x="577.500" y="492.500" width="14" height="14"/></g>
<g fill="none" stroke="#333" stroke-width="1.100"><path d="M15 499.500l3 3 5-6M60 499.500l3 3 5-6M108 499.500l3 3 5-6M156 499.500l3 3 5-6M198 499.500l3 3 5-6M242 499.500l3 3 5-6"/></g>
<g>
<text x="30" y="504" textLength="18" lengthAdjust="spacingAndGlyphs">End</text>
<text x="74" y="504" textLength="23" lengthAdjust="spacingAndGlyphs">Near</text>
<text x="122" y="504" textLength="23" lengthAdjust="spacingAndGlyphs">Point</text>
<text x="171" y="504" textLength="16" lengthAdjust="spacingAndGlyphs">Mid</text>
<text x="213" y="504" textLength="18" lengthAdjust="spacingAndGlyphs">Cen</text>
<text x="257" y="504" textLength="11" lengthAdjust="spacingAndGlyphs">Int</text>
<text x="294" y="504" textLength="21" lengthAdjust="spacingAndGlyphs">Perp</text>
<text x="341" y="504" textLength="18" lengthAdjust="spacingAndGlyphs">Tan</text>
<text x="385" y="504" textLength="25" lengthAdjust="spacingAndGlyphs">Quad</text>
<text x="436" y="504" textLength="22" lengthAdjust="spacingAndGlyphs">Knot</text>
<text x="483" y="504" textLength="30" lengthAdjust="spacingAndGlyphs">Vertex</text>
<text x="538" y="504" textLength="32" lengthAdjust="spacingAndGlyphs">Project</text>
<text x="596" y="504" textLength="34" lengthAdjust="spacingAndGlyphs">Disable</text>
</g>

<!-- status bar -->
<path d="M2 512.500h958" stroke="#a8b0c0"/>
<path d="M48.500 513v18M122.500 513v18M196.500 513v18M270.500 513v18M344.500 513v18M489.500 513v18M939.500 513v18M945 513v18" stroke="#a8b0c0"/>
<g fill="#e6f1fb"><rect x="490" y="513" width="62" height="18"/><rect x="553" y="513" width="39" height="18"/><rect x="593" y="513" width="45" height="18"/><rect x="639" y="513" width="45" height="18"/><rect x="685" y="513" width="70" height="18"/><rect x="756" y="513" width="54" height="18"/></g>
<path d="M552.500 513v18M592.500 513v18M638.500 513v18M684.500 513v18M755.500 513v18M810.500 513v18M901.500 513v18" stroke="#a8b0c0"/>
<text x="4" y="527" textLength="40" lengthAdjust="spacingAndGlyphs">CPlane</text>
<text x="63" y="527" textLength="45" lengthAdjust="spacingAndGlyphs">x 116.03</text>
<text x="144" y="527" textLength="31" lengthAdjust="spacingAndGlyphs">y 7.06</text>
<text x="218" y="527" textLength="31" lengthAdjust="spacingAndGlyphs">z 0.00</text>
<text x="278" y="527" textLength="59" lengthAdjust="spacingAndGlyphs">Millimeters</text>
<rect x="348.500" y="516.500" width="12" height="13" fill="#c80000" stroke="#111"/>
<text x="364" y="527" textLength="46" lengthAdjust="spacingAndGlyphs">Layer 01</text>
<text x="493" y="527" class="b" textLength="55" lengthAdjust="spacingAndGlyphs">Grid Snap</text>
<text x="557" y="527" class="b" textLength="32" lengthAdjust="spacingAndGlyphs">Ortho</text>
<text x="597" y="527" class="b" textLength="37" lengthAdjust="spacingAndGlyphs">Planar</text>
<text x="643" y="527" class="b" textLength="37" lengthAdjust="spacingAndGlyphs">Osnap</text>
<text x="689" y="527" class="b" textLength="65" lengthAdjust="spacingAndGlyphs">SmartTrack</text>
<text x="760" y="527" class="b" textLength="46" lengthAdjust="spacingAndGlyphs">Gumball</text>
<text x="816" y="527" textLength="81" lengthAdjust="spacingAndGlyphs">Record History</text>
<text x="907" y="527" textLength="27" lengthAdjust="spacingAndGlyphs">Filter</text>
</svg>
</body></html>
